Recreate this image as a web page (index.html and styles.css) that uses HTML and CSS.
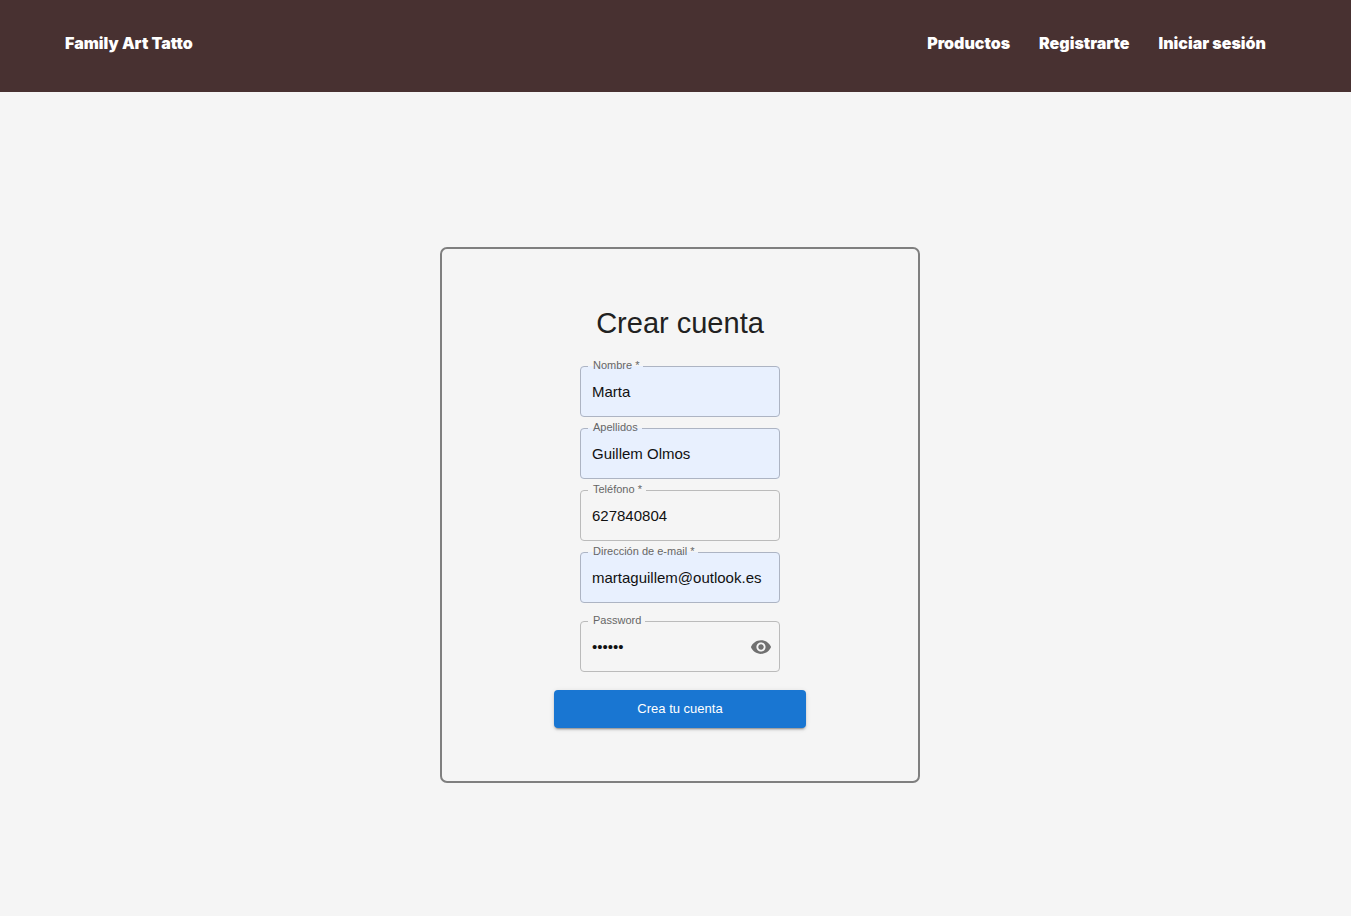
FILE: index.html
```html
<!DOCTYPE html>
<html lang="es">
<head>
<meta charset="utf-8">
<meta name="viewport" content="width=device-width, initial-scale=1">
<title>Family Art Tatto</title>
<link rel="stylesheet" href="styles.css">
</head>
<body>
<header class="site-header">
  <a class="site-link" href="#">Family Art Tatto</a>
  <nav class="site-nav">
    <a class="site-link" href="#">Productos</a>
    <a class="site-link" href="#">Registrarte</a>
    <a class="site-link" href="#">Iniciar sesión</a>
  </nav>
</header>
<main class="page">
  <form class="card">
    <h1 class="card-title">Crear cuenta</h1>
    <div class="fields">
      <fieldset class="field field-filled">
        <legend class="field-legend"><label for="nombre">Nombre *</label></legend>
        <input class="field-input" id="nombre" type="text" value="Marta">
      </fieldset>
      <fieldset class="field field-filled">
        <legend class="field-legend"><label for="apellidos">Apellidos</label></legend>
        <input class="field-input" id="apellidos" type="text" value="Guillem Olmos">
      </fieldset>
      <fieldset class="field">
        <legend class="field-legend"><label for="telefono">Teléfono *</label></legend>
        <input class="field-input" id="telefono" type="tel" value="627840804">
      </fieldset>
      <fieldset class="field field-filled">
        <legend class="field-legend"><label for="email">Dirección de e-mail *</label></legend>
        <input class="field-input" id="email" type="email" value="martaguillem@outlook.es">
      </fieldset>
      <fieldset class="field field-password">
        <legend class="field-legend"><label for="password">Password</label></legend>
        <div class="field-row">
          <input class="field-input" id="password" type="password" value="123456">
          <button class="reveal" type="button" aria-label="Mostrar password">
            <svg class="reveal-icon" viewBox="0 0 24 24" aria-hidden="true"><path d="M12 4.500C7 4.500 2.730 7.610 1 12c1.730 4.390 6 7.500 11 7.500s9.270-3.110 11-7.500c-1.730-4.390-6-7.500-11-7.500zM12 17c-2.760 0-5-2.240-5-5s2.240-5 5-5 5 2.240 5 5-2.240 5-5 5zm0-8c-1.660 0-3 1.340-3 3s1.340 3 3 3 3-1.340 3-3-1.340-3-3-3z"/></svg>
          </button>
        </div>
      </fieldset>
    </div>
    <button class="submit" type="submit">Crea tu cuenta</button>
  </form>
</main>
</body>
</html>
```
FILE: styles.css
```css
* {
  box-sizing: border-box;
}

body {
  margin: 0;
  min-height: 100vh;
  display: flex;
  flex-direction: column;
  background: #f5f5f5;
  color: #212121;
  font-family: Arial, "Liberation Sans", sans-serif;
}

.site-header {
  display: flex;
  justify-content: space-between;
  padding: 33px 85px 39px 65px;
  background: #483131;
}

.site-nav {
  display: flex;
  gap: 29px;
}

.site-link {
  color: #fff;
  font: 900 16px/20px Inter, "Liberation Sans", sans-serif;
  text-decoration: none;
}

.page {
  flex: 1;
  display: flex;
  flex-direction: column;
  align-items: center;
  justify-content: center;
  padding: 24px 0 2px 9px;
}

.card {
  display: flex;
  flex-direction: column;
  align-items: center;
  width: 100%;
  max-width: 480px;
  padding: 54px 32px 53px;
  border: 2px solid #7f7f7f;
  border-radius: 7px;
}

.card-title {
  margin: 0 0 17px;
  font-size: 29px;
  font-weight: 400;
  line-height: 40px;
}

.fields {
  display: flex;
  flex-direction: column;
  gap: 5px;
  width: 200px;
}

.field {
  min-width: 0;
  margin: 0;
  padding: 0;
  border: 1px solid #bbb;
  border-radius: 4px;
}

.field-filled {
  background: #e8f0fe;
  border-color: #adb4c3;
}

.field-password {
  margin-top: 7px;
}

.field-legend {
  margin-left: 7px;
  padding: 0 4px 3px 5px;
  color: #666;
  font-size: 11px;
  line-height: 10px;
}

.field-row {
  display: flex;
  align-items: center;
}

.field-input {
  display: block;
  width: 100%;
  min-width: 0;
  height: 43px;
  padding: 0 11px 6px;
  border: 0;
  outline: 0;
  background: transparent;
  color: #111;
  font-family: inherit;
  font-size: 15px;
}

.reveal {
  display: flex;
  padding: 0 7px 6px;
  border: 0;
  background: transparent;
}

.reveal-icon {
  width: 22px;
  height: 22px;
  fill: #707070;
}

.submit {
  width: 252px;
  margin-top: 18px;
  padding: 0;
  border: 0;
  border-radius: 4px;
  background: #1976d2;
  box-shadow: 0 3px 1px -2px rgba(0, 0, 0, 0.2), 0 2px 2px rgba(0, 0, 0, 0.14), 0 1px 5px rgba(0, 0, 0, 0.12);
  color: #fff;
  font: 500 13px/38px Arial, "Liberation Sans", sans-serif;
}
```
